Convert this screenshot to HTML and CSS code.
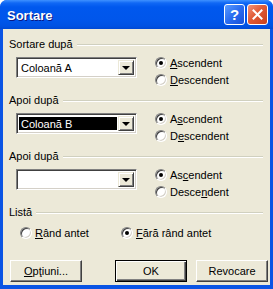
FILE: index.html
```html
<!DOCTYPE html>
<html lang="ro">
<head>
  <meta charset="utf-8">
  <title>Sortare</title>
  <link rel="stylesheet" href="styles.css">
</head>
<body>
  <div class="window">
    <div class="titlebar">
      <span class="titlebar__text">Sortare</span>
      <div class="titlebar__btns">
        <span class="cap-btn cap-btn--help">?</span>
        <span class="cap-btn cap-btn--close">
          <svg width="11" height="11" viewBox="0 0 11 11" aria-hidden="true">
            <path d="M1.5 1.5l8 8M9.5 1.5l-8 8" stroke="#fff" stroke-width="2" stroke-linecap="square"/>
          </svg>
        </span>
      </div>
    </div>

    <div class="client">
      <!-- Sortare după -->
      <section class="group">
        <div class="group__head"><span>Sortare după</span><i class="group__line"></i></div>
        <div class="group__body">
          <div class="combo">
            <span class="combo__text">Coloană A</span>
            <span class="combo__btn"><i class="combo__arrow"></i></span>
          </div>
          <div class="radios">
            <label class="radio"><span class="radio__box is-checked"></span><span><u>A</u>scendent</span></label>
            <label class="radio"><span class="radio__box"></span><span><u>D</u>escendent</span></label>
          </div>
        </div>
      </section>

      <!-- Apoi după -->
      <section class="group">
        <div class="group__head"><span>Apoi după</span><i class="group__line"></i></div>
        <div class="group__body">
          <div class="combo">
            <span class="combo__text combo__text--selected">Coloană B</span>
            <span class="combo__btn"><i class="combo__arrow"></i></span>
          </div>
          <div class="radios">
            <label class="radio"><span class="radio__box is-checked"></span><span>A<u>s</u>cendent</span></label>
            <label class="radio"><span class="radio__box"></span><span>D<u>e</u>scendent</span></label>
          </div>
        </div>
      </section>

      <!-- Apoi după -->
      <section class="group">
        <div class="group__head"><span>Apoi după</span><i class="group__line"></i></div>
        <div class="group__body">
          <div class="combo">
            <span class="combo__text"></span>
            <span class="combo__btn"><i class="combo__arrow"></i></span>
          </div>
          <div class="radios">
            <label class="radio"><span class="radio__box is-checked"></span><span>As<u>c</u>endent</span></label>
            <label class="radio"><span class="radio__box"></span><span>Desce<u>n</u>dent</span></label>
          </div>
        </div>
      </section>

      <!-- Listă -->
      <section class="group">
        <div class="group__head"><span>Listă</span><i class="group__line"></i></div>
        <div class="group__body group__body--list">
          <label class="radio radio--wide"><span class="radio__box"></span><span><u>R</u>ând antet</span></label>
          <label class="radio"><span class="radio__box is-checked"></span><span><u>F</u>ără rând antet</span></label>
        </div>
      </section>

      <div class="actions">
        <button class="btn"><u>O</u>pţiuni...</button>
        <button class="btn btn--default">OK</button>
        <button class="btn">Revocare</button>
      </div>
    </div>
  </div>
</body>
</html>
```

FILE: styles.css
```css
*, *::before, *::after {
  box-sizing: border-box;
}

html, body {
  margin: 0;
  padding: 0;
  background: #ffffff;
}

body {
  font-family: "Liberation Sans", Arial, sans-serif;
  font-size: 11px;
  color: #000000;
}

.window {
  display: flex;
  flex-direction: column;
  width: 273px;
  height: 289px;
  border-radius: 7px 7px 0 0;
  overflow: hidden;
  background: #0a54e4;
}

/* Заголовок окна */
.titlebar {
  display: flex;
  align-items: center;
  justify-content: space-between;
  height: 29px;
  padding: 0 5px 0 7px;
  background: linear-gradient(#3e91ff 0, #1068f5 3px, #0058ee 7px, #0056eb 20px, #0052e3 26px, #0049d4 29px);
}

.titlebar__text {
  padding-top: 1px;
  font-size: 13px;
  font-weight: bold;
  color: #ffffff;
  text-shadow: 1px 1px 0 #0a1883;
}

.titlebar__btns {
  display: flex;
  gap: 2px;
}

.cap-btn {
  display: flex;
  align-items: center;
  justify-content: center;
  width: 21px;
  height: 21px;
  border: 1px solid #ffffff;
  border-radius: 3px;
  color: #ffffff;
  font-size: 15px;
  font-weight: bold;
}

.cap-btn--help {
  background: linear-gradient(135deg, #5a9cff 0%, #2a6cf0 50%, #1750d8 100%);
}

.cap-btn--close {
  background: linear-gradient(135deg, #f2937a 0%, #e05a36 45%, #c8401c 100%);
}

/* Клиентская область */
.client {
  flex: 1;
  display: flex;
  flex-direction: column;
  margin: 0 3px 4px;
  padding: 9px 2px 0 6px;
  background: #ece9d8;
}

.group {
  display: flex;
  flex-direction: column;
  margin-right: 5px;
}

.group + .group {
  margin-top: 6px;
}

.group__head {
  display: flex;
  align-items: center;
  height: 13px;
  line-height: 13px;
}

.group__line {
  flex: 1;
  height: 2px;
  margin: 1px 0 0 4px;
  border-top: 1px solid #d0d0bf;
  border-bottom: 1px solid #ffffff;
}

.group__body {
  display: flex;
  align-items: flex-start;
  margin-top: 3px;
  padding-left: 7px;
}

.group__body--list {
  margin-top: 5px;
  padding-left: 11px;
}

/* Выпадающий список */
.combo {
  display: flex;
  width: 121px;
  height: 21px;
  margin-top: 3px;
  padding: 2px;
  background: #ffffff;
  border: 1px solid;
  border-color: #808080 #ffffff #ffffff #808080;
  box-shadow: inset 1px 1px 0 #404040, inset -1px -1px 0 #d4d0c8;
}

.combo__text {
  flex: 1;
  margin: 1px 1px 1px 0;
  padding-left: 2px;
  line-height: 15px;
  white-space: nowrap;
}

.combo__text--selected {
  background: #000000;
  color: #ffffff;
}

.combo__btn {
  display: flex;
  align-items: center;
  justify-content: center;
  width: 16px;
  background: #ece9d8;
  border: 1px solid;
  border-color: #ece9d8 #404040 #404040 #ece9d8;
  box-shadow: inset 1px 1px 0 #ffffff, inset -1px -1px 0 #808080;
}

.combo__arrow {
  width: 0;
  height: 0;
  border-left: 4px solid transparent;
  border-right: 4px solid transparent;
  border-top: 4px solid #000000;
}

/* Радиокнопки */
.radios {
  display: flex;
  flex-direction: column;
  margin-left: 18px;
}

.radio {
  display: flex;
  align-items: center;
  height: 17px;
  white-space: nowrap;
}

.radio--wide {
  width: 101px;
}

.radio__box {
  position: relative;
  flex: none;
  width: 12px;
  height: 12px;
  margin-right: 3px;
  border-radius: 50%;
  background: #ffffff;
  border: 1px solid;
  border-color: #808080 #ffffff #ffffff #808080;
  box-shadow: inset 1px 1px 0 #404040, inset -1px -1px 0 #d4d0c8;
}

.radio__box.is-checked::after {
  content: "";
  position: absolute;
  top: 3px;
  left: 3px;
  width: 4px;
  height: 4px;
  border-radius: 50%;
  background: #000000;
}

/* Кнопки диалога */
.actions {
  display: flex;
  gap: 9px;
  margin-top: 19px;
  padding-left: 1px;
}

.btn {
  width: 72px;
  height: 22px;
  padding: 0;
  font-family: inherit;
  font-size: 11px;
  color: #000000;
  background: #ece9d8;
  border: 1px solid;
  border-color: #ffffff #404040 #404040 #ffffff;
  box-shadow: inset -1px -1px 0 #808080;
}

.btn--default {
  margin-left: auto;
  border: 1px solid #000000;
  box-shadow: inset 1px 1px 0 #ffffff, inset -1px -1px 0 #404040, inset -2px -2px 0 #808080;
}
```
